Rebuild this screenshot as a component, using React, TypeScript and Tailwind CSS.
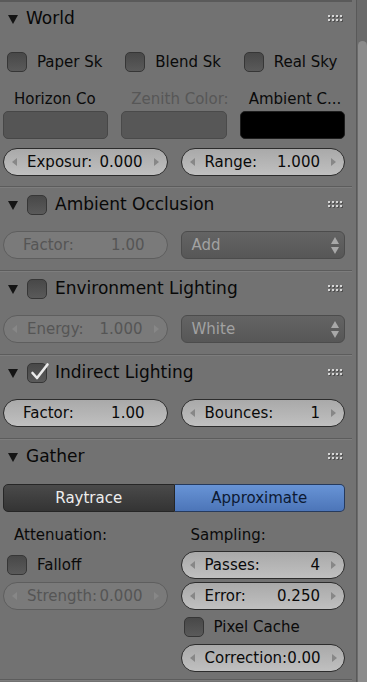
import React from "react";

// Blender 2.7x style "World" properties panel

function Triangle() {
  return (
    <svg width="10" height="9" viewBox="0 0 10 9" className="shrink-0">
      <path d="M0 0 H10 L5 9 Z" fill="#141414" />
    </svg>
  );
}

function Grip() {
  const dots: [number, number][] = [];
  for (let r = 0; r < 2; r++) for (let c = 0; c < 4; c++) dots.push([c * 4, r * 4]);
  return (
    <svg width="15" height="8" viewBox="0 0 15 8" className="shrink-0">
      {dots.map(([x, y], i) => (
        <g key={i}>
          <rect x={x + 1} y={y + 1} width="2" height="2" fill="#505050" />
          <rect x={x} y={y} width="2" height="2" fill="#d6d6d6" />
        </g>
      ))}
    </svg>
  );
}

function Check({ checked }: { checked?: boolean }) {
  return (
    <div className="w-[20px] h-[20px] rounded-[5px] border border-[#363636] bg-gradient-to-b from-[#484848] to-[#5a5a5a] shrink-0">
      {checked && (
        <svg width="20" height="20" viewBox="0 0 20 20" className="overflow-visible">
          <path
            d="M4.5 9 L9 14 L19.5 0.5"
            stroke="#ececec"
            strokeWidth="2.6"
            fill="none"
            strokeLinecap="round"
            strokeLinejoin="round"
          />
        </svg>
      )}
    </div>
  );
}

function Arrow({ dir }: { dir: "l" | "r" }) {
  return (
    <svg width="5" height="8" viewBox="0 0 5 8" className="shrink-0">
      <path d={dir === "l" ? "M5 0 V8 L0 4 Z" : "M0 0 V8 L5 4 Z"} fill="#878787" />
    </svg>
  );
}

function Separator() {
  return (
    <div className="mr-[4px]">
      <div className="h-px bg-[#5c5c5c]" />
      <div className="h-px bg-[#7d7d7d]" />
    </div>
  );
}

function Header({ title, check }: { title: string; check?: "off" | "on" }) {
  return (
    <div className="h-[34px] flex items-center pl-[8px] pr-[13px]">
      <Triangle />
      {check && (
        <div className="ml-[9px]">
          <Check checked={check === "on"} />
        </div>
      )}
      <span className="ml-[8px] text-[17px] text-[#080808] whitespace-nowrap">{title}</span>
      <div className="ml-auto">
        <Grip />
      </div>
    </div>
  );
}

function NumField({
  label,
  value,
  arrows = true,
  disabled,
}: {
  label: string;
  value: string;
  arrows?: boolean;
  disabled?: boolean;
}) {
  const tone = disabled
    ? "border-[#5e5e5e] bg-[#7a7a7a] text-[#555555]"
    : "border-[#2c2c2c] bg-gradient-to-b from-[#a9a9a9] to-[#c0c0c0] text-[#0a0a0a]";
  return (
    <div
      className={`h-[28px] rounded-full border flex items-center text-[15px] whitespace-nowrap ${tone} ${
        arrows ? "px-[8px]" : "pl-[19px] pr-[22px]"
      }`}
    >
      {arrows && <Arrow dir="l" />}
      <span className={arrows ? "ml-[10px]" : ""}>{label}</span>
      <span className={`ml-auto ${arrows ? "mr-[11px]" : ""}`}>{value}</span>
      {arrows && <Arrow dir="r" />}
    </div>
  );
}

function Dropdown({ value }: { value: string }) {
  return (
    <div className="h-[28px] rounded-[6px] border border-[#4c4c4c] bg-gradient-to-b from-[#646464] to-[#575757] flex items-center pl-[10px] pr-[5px] text-[15px] text-[#a2a2a2]">
      <span>{value}</span>
      <svg width="8" height="17" viewBox="0 0 8 17" className="ml-auto">
        <path d="M0 7 L4 0 L8 7 Z" fill="#a8a8a8" />
        <path d="M0 10 L8 10 L4 17 Z" fill="#a8a8a8" />
      </svg>
    </div>
  );
}

function CheckRow({ label, pad = "pl-[4px]" }: { label: string; pad?: string }) {
  return (
    <div className={`h-[28px] flex items-center ${pad}`}>
      <Check />
      <span className="ml-[10px] text-[15px] text-[#0a0a0a] whitespace-nowrap">{label}</span>
    </div>
  );
}

export default function App() {
  return (
    <div className="w-[367px] h-[682px] overflow-hidden bg-[#727272] flex font-['DejaVu_Sans','Liberation_Sans',sans-serif]">
      <div className="w-[356px] shrink-0 flex flex-col">
        <div className="h-[2px] bg-[#5a5a5a] mr-[4px]" />

        {/* World */}
        <Header title="World" />
        <div className="pl-[3px] pr-[11px] pt-[12px] pb-[10px]">
          <div className="grid grid-cols-3 gap-x-[13px]">
            <CheckRow label="Paper Sk" />
            <CheckRow label="Blend Sk" />
            <CheckRow label="Real Sky" />
          </div>
          <div className="grid grid-cols-3 gap-x-[13px] mt-[12px] h-[22px] text-[15px] whitespace-nowrap">
            <div className="pl-[11px] flex items-center text-[#0a0a0a]">Horizon Co</div>
            <div className="pl-[10px] flex items-center text-[#575757]">Zenith Color:</div>
            <div className="pl-[9px] flex items-center text-[#0a0a0a]">Ambient C...</div>
          </div>
          <div className="grid grid-cols-3 gap-x-[13px] mt-[1px]">
            <div className="h-[28px] rounded-[5px] border border-[#474747] bg-[#555555]" />
            <div className="h-[28px] rounded-[5px] border border-[#4a4a4a] bg-[#575757]" />
            <div className="h-[28px] rounded-[5px] border border-[#1e1e1e] bg-[#000000]" />
          </div>
          <div className="grid grid-cols-2 gap-x-[13px] mt-[9px]">
            <NumField label="Exposur:" value="0.000" />
            <NumField label="Range:" value="1.000" />
          </div>
        </div>

        {/* Ambient Occlusion */}
        <Separator />
        <Header title="Ambient Occlusion" check="off" />
        <div className="pl-[3px] pr-[11px] pt-[9px] pb-[11px]">
          <div className="grid grid-cols-2 gap-x-[13px]">
            <NumField label="Factor:" value="1.00" arrows={false} disabled />
            <Dropdown value="Add" />
          </div>
        </div>

        {/* Environment Lighting */}
        <Separator />
        <Header title="Environment Lighting" check="off" />
        <div className="pl-[3px] pr-[11px] pt-[9px] pb-[11px]">
          <div className="grid grid-cols-2 gap-x-[13px]">
            <NumField label="Energy:" value="1.000" disabled />
            <Dropdown value="White" />
          </div>
        </div>

        {/* Indirect Lighting */}
        <Separator />
        <Header title="Indirect Lighting" check="on" />
        <div className="pl-[3px] pr-[11px] pt-[9px] pb-[11px]">
          <div className="grid grid-cols-2 gap-x-[13px]">
            <NumField label="Factor:" value="1.00" arrows={false} />
            <NumField label="Bounces:" value="1" />
          </div>
        </div>

        {/* Gather */}
        <Separator />
        <Header title="Gather" />
        <div className="pl-[3px] pr-[11px] pt-[10px] pb-[7px]">
          <div className="flex h-[28px] text-[15px]">
            <div className="flex-1 rounded-l-[5px] border border-[#262626] bg-gradient-to-b from-[#4a4a4a] to-[#343434] text-[#ededed] flex items-center justify-center">
              Raytrace
            </div>
            <div className="flex-1 rounded-r-[5px] border border-l-0 border-[#263a5c] bg-gradient-to-b from-[#6894d6] to-[#4c75b8] text-[#0d1a33] flex items-center justify-center">
              Approximate
            </div>
          </div>
          <div className="grid grid-cols-2 gap-x-[13px] mt-[10px] items-start">
            <div className="flex flex-col gap-[3px]">
              <div className="h-[26px] pl-[11px] flex items-center text-[15px] text-[#0a0a0a]">
                Attenuation:
              </div>
              <CheckRow label="Falloff" />
              <NumField label="Strength:" value="0.000" disabled />
            </div>
            <div className="flex flex-col gap-[3px]">
              <div className="h-[26px] pl-[10px] flex items-center text-[15px] text-[#0a0a0a]">
                Sampling:
              </div>
              <NumField label="Passes:" value="4" />
              <NumField label="Error:" value="0.250" />
              <CheckRow label="Pixel Cache" pad="pl-[3px]" />
              <NumField label="Correction:" value="0.00" />
            </div>
          </div>
        </div>
        <Separator />
      </div>

      {/* scrollbar */}
      <div className="w-[11px] shrink-0 border-l border-[#595959] bg-[#6a6a6a] flex flex-col">
        <div className="h-[41px] shrink-0" />
        <div className="flex-1 ml-[1px] rounded-t-[5px] bg-[#8c8c8c]" />
      </div>
    </div>
  );
}
